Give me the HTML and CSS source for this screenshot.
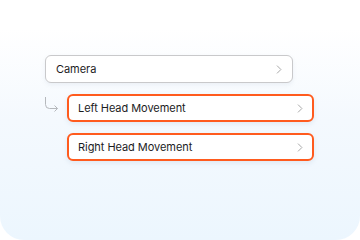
FILE: index.html
```html
<!DOCTYPE html>
<html>
<head>
<meta charset="utf-8">
<link rel="stylesheet" href="styles.css">
</head>
<body>
<div class="panel">
  <div class="tree">
    <div class="item item-parent">
      <span class="label">Camera</span>
      <svg class="chev" width="6" height="9" viewBox="0 0 6 9"><path d="M1 0.6 L4.9 4.5 L1 8.4" fill="none" stroke="#a9a9a9" stroke-width="1"/></svg>
    </div>
    <div class="child-row">
      <svg class="branch" width="22" height="28" viewBox="0 0 22 28"><path d="M0.5 3 V10.5 Q0.5 14.5 4.5 14.5 H12.5 M9.5 11.5 L12.5 14.5 L9.5 17.5" fill="none" stroke="#b5b8bc" stroke-width="1"/></svg>
      <div class="item item-child">
        <span class="label">Left Head Movement</span>
        <svg class="chev" width="6" height="9" viewBox="0 0 6 9"><path d="M1 0.6 L4.9 4.5 L1 8.4" fill="none" stroke="#a9a9a9" stroke-width="1"/></svg>
      </div>
    </div>
    <div class="child-row">
      <span class="spacer"></span>
      <div class="item item-child">
        <span class="label">Right Head Movement</span>
        <svg class="chev" width="6" height="9" viewBox="0 0 6 9"><path d="M1 0.6 L4.9 4.5 L1 8.4" fill="none" stroke="#a9a9a9" stroke-width="1"/></svg>
      </div>
    </div>
  </div>
</div>
</body>
</html>
```
FILE: styles.css
```css
html, body {
  margin: 0;
  padding: 0;
  background: #ffffff;
}
body {
  width: 360px;
  height: 240px;
  overflow: hidden;
  font-family: Inter, "Noto Sans", sans-serif;
}
.panel {
  width: 360px;
  height: 240px;
  box-sizing: border-box;
  padding: 55px 0 0 45px;
  background: linear-gradient(180deg, #ffffff 12%, #f4f9fe 50%, #ecf6fe 100%);
  border-radius: 0 0 24px 24px;
}
.tree {
  display: flex;
  flex-direction: column;
  gap: 11px;
}
.item {
  box-sizing: border-box;
  height: 28px;
  display: flex;
  align-items: center;
  justify-content: space-between;
  background: #ffffff;
  border-radius: 6px;
  font-size: 11px;
  color: #1c1c1e;
  letter-spacing: -0.05px;
}
.item-parent {
  width: 248px;
  border: 1px solid #c9c9cb;
  padding: 0 10px 0 10px;
  box-shadow: 0 2px 4px rgba(120, 140, 170, 0.10);
}
.item-child {
  width: 247px;
  border: 2px solid #ff5b1e;
  padding: 0 9px 0 9px;
  box-shadow: 0 2px 5px rgba(120, 140, 170, 0.14);
}
.child-row {
  display: flex;
  align-items: center;
}
.branch, .spacer {
  width: 22px;
  height: 28px;
  flex: none;
  display: block;
}
.chev {
  display: block;
  flex: none;
}
.label {
  line-height: 14px;
}
```
